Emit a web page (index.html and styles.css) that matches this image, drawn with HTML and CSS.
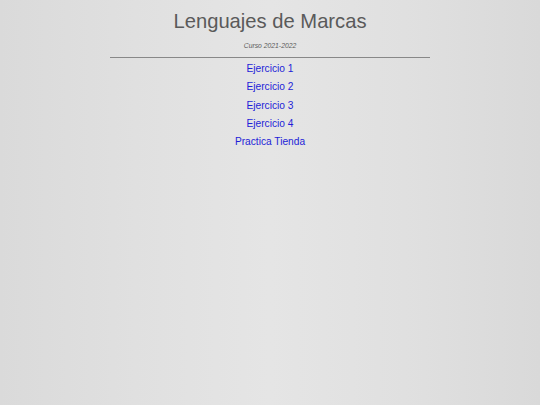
FILE: index.html
```html
<!DOCTYPE HTML>
<html>
 <head>
  <meta charset="utf-8">
  <title>Lenguajes de Marcas</title>
  <link rel="stylesheet" href="styles.css">
 </head>
 <body>
  <h1>Lenguajes de Marcas</h1>
  <p class="curso">Curso 2021-2022</p>
  <hr>
  <ul class="menu">
   <li><a href="ejercicio1/index.html">Ejercicio 1</a></li>
   <li><a href="ejercicio2/index.html">Ejercicio 2</a></li>
   <li><a href="ejercicio3/index.html">Ejercicio 3</a></li>
   <li><a href="ejercicio4/index.html">Ejercicio 4</a></li>
   <li><a href="tienda/index.html">Practica Tienda</a></li>
  </ul>
 </body>
</html>
```

FILE: styles.css
```css
html {
  min-height: 100%;
  background: linear-gradient(to right, #dadada 0%, #e0e0e0 25%, #e5e5e5 50%, #e0e0e0 75%, #d9d9d9 100%);
}
body {
  margin: 8px;
  font-family: "Liberation Sans", Arial, sans-serif;
  text-align: center;
  color: #5a5a5a;
}
h1 {
  font-size: 20.2px;
  font-weight: normal;
  margin: 1px 0 0 0;
  line-height: 24px;
}
.curso {
  font-size: 6.8px;
  line-height: 8px;
  font-style: italic;
  margin: 9px 0 0 0;
}
hr {
  width: 61.2%;
  margin: 7px auto 0 auto;
  border: none;
  border-top: 1px solid #888;
}
.menu {
  list-style: none;
  padding: 0;
  margin: 2px 0 0 0;
}
.menu li {
  font-size: 10.2px;
  line-height: 18.3px;
}
.menu a {
  color: #1e1ed8;
  text-decoration: none;
}
```
